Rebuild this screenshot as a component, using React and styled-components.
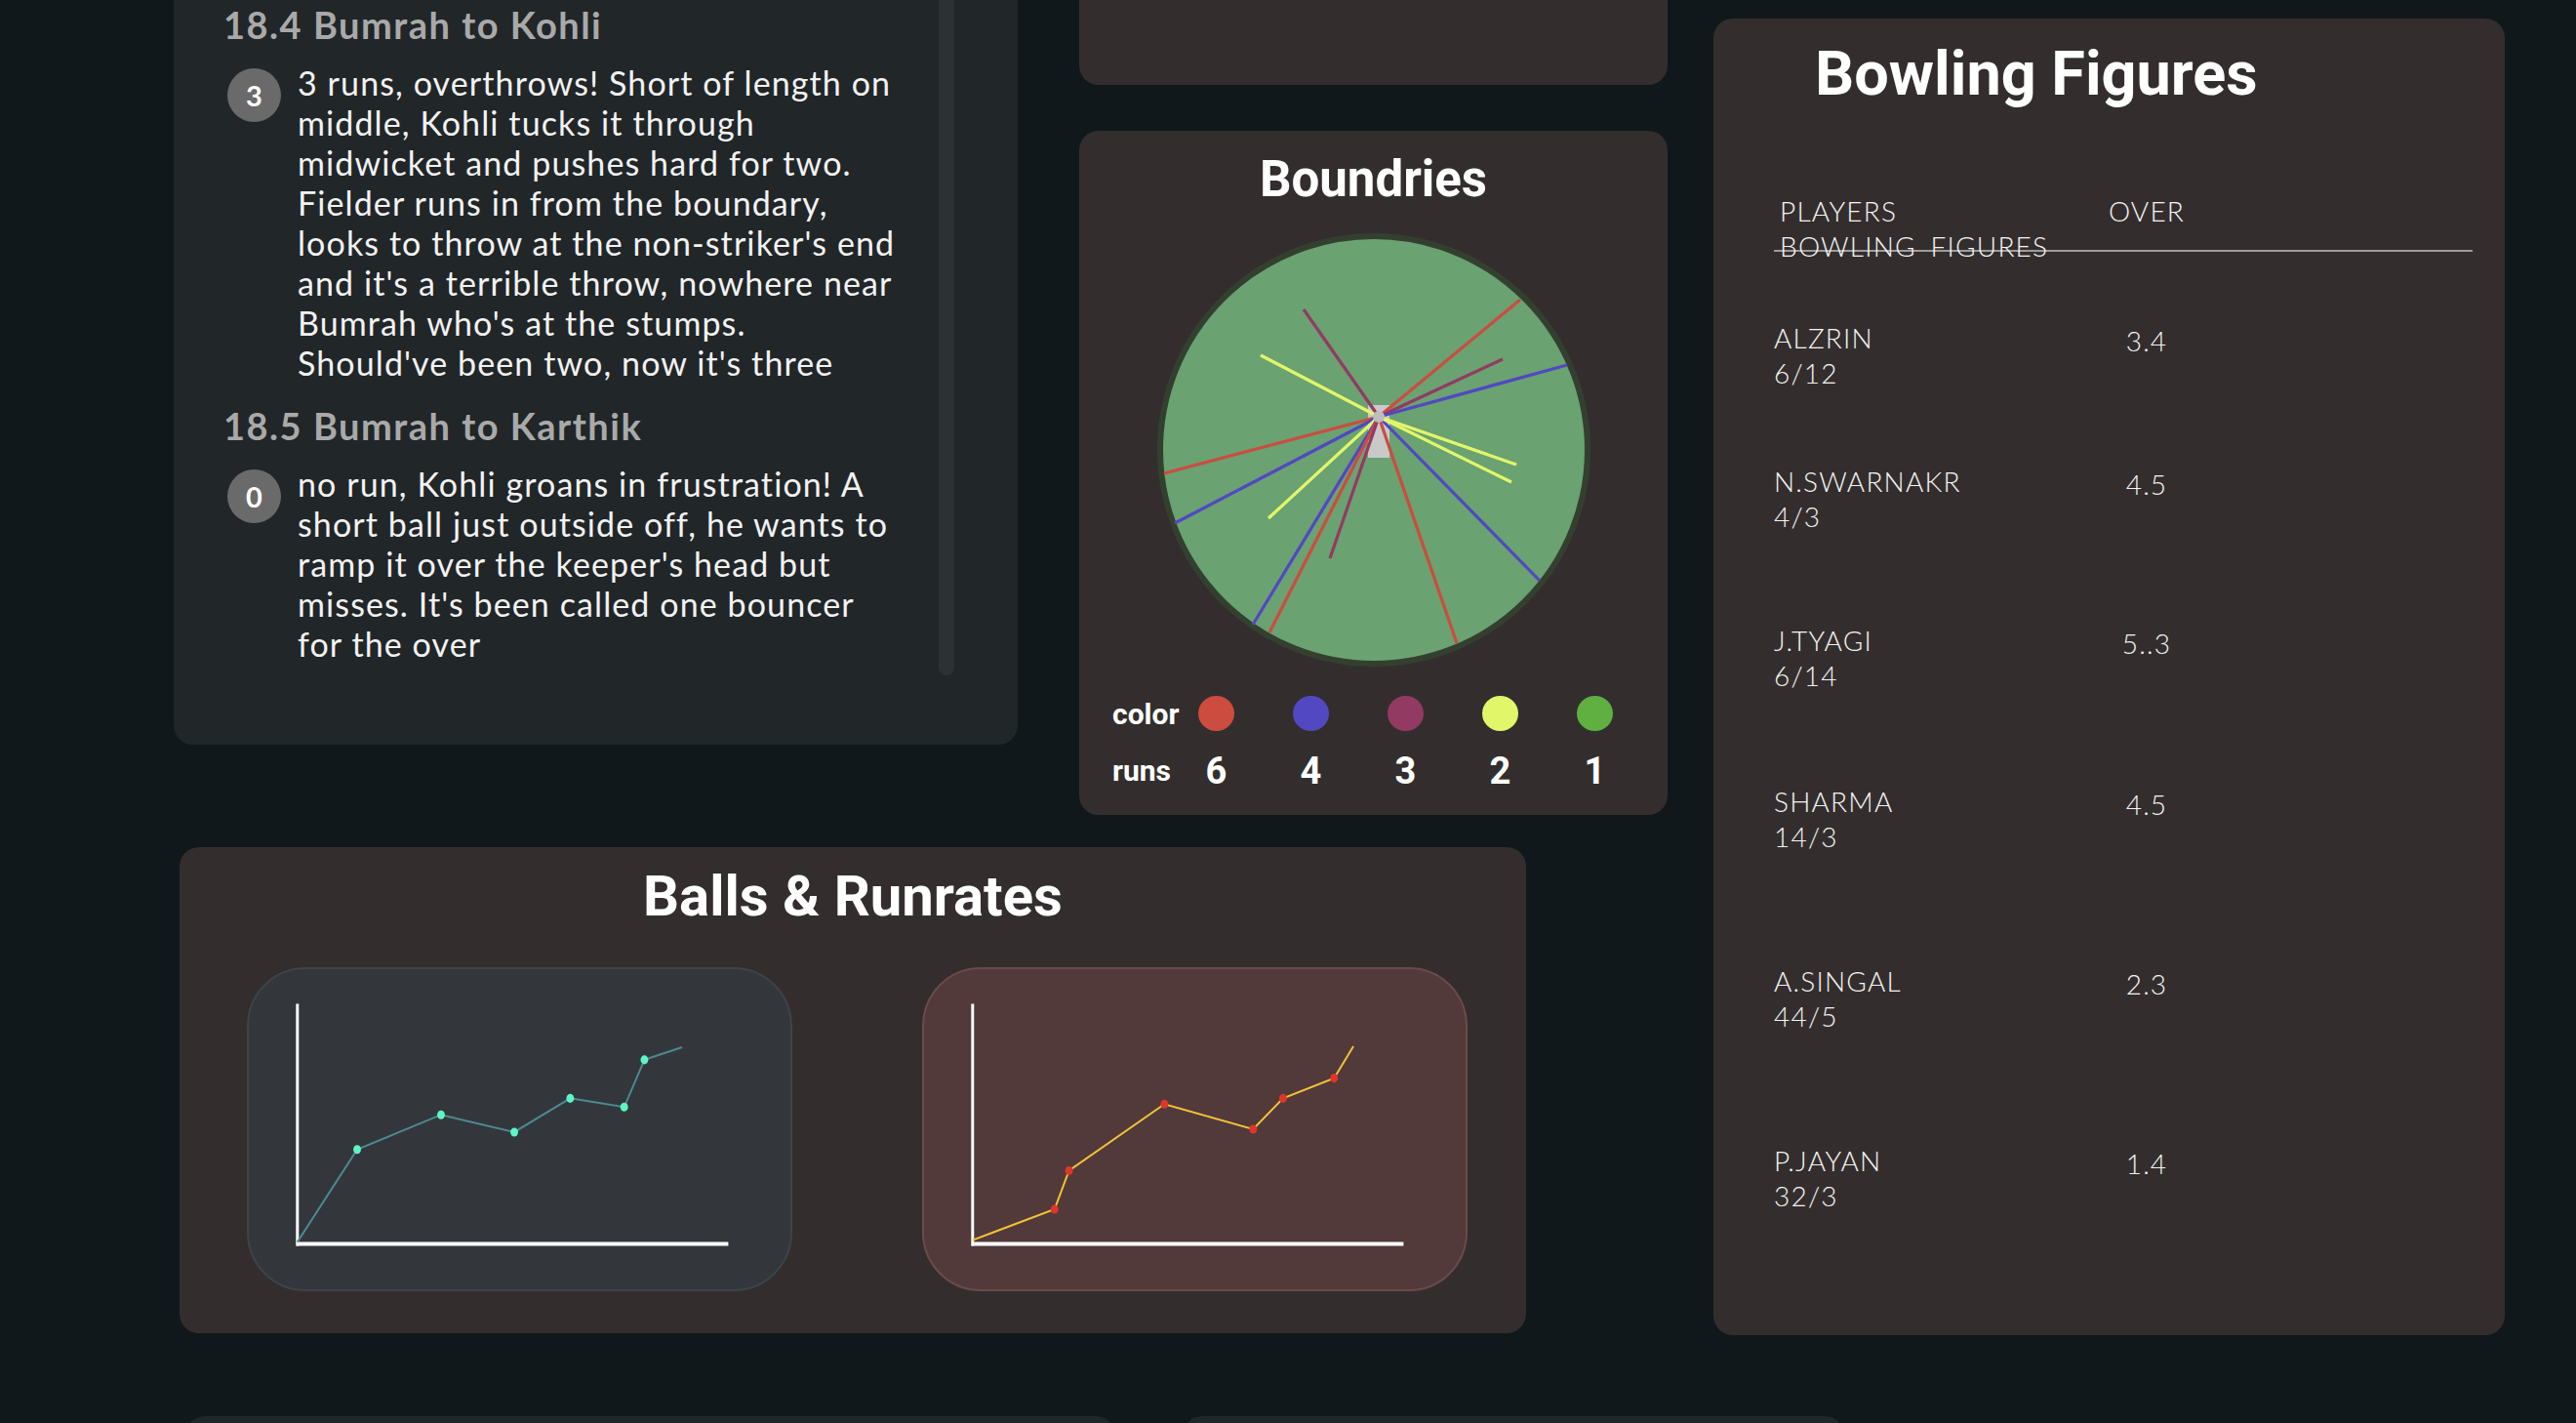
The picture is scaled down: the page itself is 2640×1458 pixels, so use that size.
import React from "react";
import styled, { createGlobalStyle } from "styled-components";

const GlobalStyle = createGlobalStyle`
  * { box-sizing: border-box; }
  body {
    margin: 0;
    background: #10181b;
    font-family: "Lato", "Liberation Sans", sans-serif;
    overflow: hidden;
  }
`;

const balls = [
  {
    over: "18.4 Bumrah to Kohli",
    runs: "3",
    text: "3 runs, overthrows! Short of length on middle, Kohli tucks it through midwicket and pushes hard for two. Fielder runs in from the boundary, looks to throw at the non-striker's end and it's a terrible throw, nowhere near Bumrah who's at the stumps. Should've been two, now it's three",
  },
  {
    over: "18.5 Bumrah to Karthik",
    runs: "0",
    text: "no run, Kohli groans in frustration! A short ball just outside off, he wants to ramp it over the keeper's head but misses. It's been called one bouncer for the over",
  },
];

const shotColors = {
  6: "#cc4c40",
  4: "#5148c2",
  3: "#933a62",
  2: "#e2f66a",
  1: "#5fb041",
};

// wagon wheel: end points of every shot, from the striker at (228,189)
const shots = [
  { run: 3, x: 151, y: 79 },
  { run: 2, x: 107, y: 126 },
  { run: 6, x: 373, y: 69 },
  { run: 3, x: 355, y: 130 },
  { run: 4, x: 421, y: 136 },
  { run: 6, x: 8, y: 247 },
  { run: 4, x: 19, y: 298 },
  { run: 2, x: 115, y: 293 },
  { run: 4, x: 99, y: 402 },
  { run: 6, x: 116, y: 410 },
  { run: 3, x: 178, y: 334 },
  { run: 6, x: 308, y: 421 },
  { run: 4, x: 393, y: 357 },
  { run: 2, x: 369, y: 238 },
  { run: 2, x: 364, y: 256 },
];

const bowlers = [
  { name: "ALZRIN", figures: "6/12", over: "3.4", space: 70 },
  { name: "N.SWARNAKR", figures: "4/3", over: "4.5", space: 75 },
  { name: "J.TYAGI", figures: "6/14", over: "5..3", space: 91 },
  { name: "SHARMA", figures: "14/3", over: "4.5", space: 93 },
  { name: "A.SINGAL", figures: "44/5", over: "2.3", space: 112 },
  { name: "P.JAYAN", figures: "32/3", over: "1.4", space: 112 },
];

const ballsLine = [
  [49, 283], [111, 187], [198, 151], [274, 169], [332, 134], [388, 143], [409, 94], [448, 81],
];
const rateLine = [
  [49, 281], [134, 249], [149, 209], [248, 140], [340, 166], [371, 134], [424, 113], [444, 80],
];

const Page = styled.div`
  width: 2640px;
  margin-top: -60px;
  padding-left: 178px;
`;

const Dashboard = styled.div`
  display: flex;
  align-items: flex-start;
  gap: 47px;
`;

const MainColumn = styled.div`
  width: 1531px;
  display: flex;
  flex-direction: column;
`;

const TopRow = styled.div`
  display: flex;
  align-items: flex-start;
  gap: 63px;
`;

const CommentaryCard = styled.div`
  width: 865px;
  height: 823px;
  display: flex;
  gap: 41px;
  padding: 63px 65px 0 51px;
  background: #212628;
  border-radius: 20px;
`;

const Feed = styled.div`
  width: 692px;
  display: flex;
  flex-direction: column;
`;

const OverTitle = styled.h3`
  margin: 0 0 16px;
  font-family: "Lato", "Liberation Sans", sans-serif;
  font-weight: 700;
  font-size: 38px;
  line-height: 45px;
  letter-spacing: 1.5px;
  color: #a9a9a9;
`;

const Ball = styled.div`
  display: flex;
  align-items: flex-start;
  gap: 17px;
  padding-left: 4px;
  margin-bottom: 22px;
`;

const RunBadge = styled.span`
  flex: none;
  width: 55px;
  height: 55px;
  margin-top: 6px;
  border-radius: 50%;
  background: #6a6a6a;
  color: #fff;
  display: flex;
  align-items: center;
  justify-content: center;
  font-family: "Lato", sans-serif;
  font-weight: 700;
  font-size: 29px;
`;

const BallText = styled.p`
  margin: 0;
  flex: 1;
  font-family: "Lato", "Liberation Sans", sans-serif;
  font-size: 34px;
  line-height: 41px;
  letter-spacing: 1.1px;
  color: #f2f2f2;
`;

const Track = styled.div`
  width: 16px;
  margin: -63px 0 71px;
  border-radius: 8px;
  background: #2c3133;
`;

const SideStack = styled.div`
  width: 603px;
  display: flex;
  flex-direction: column;
  gap: 47px;
`;

const Panel = styled.div`
  background: #332e2d;
  border-radius: 20px;
`;

const BlankPanel = styled(Panel)`
  height: 147px;
`;

const BoundaryPanel = styled(Panel)`
  display: flex;
  flex-direction: column;
  align-items: center;
  padding: 20px 0 23px;
`;

const PanelTitle = styled.h2`
  margin: 0;
  font-family: "Roboto", "Liberation Sans", sans-serif;
  font-weight: 700;
  font-size: ${(p) => p.$size || 51}px;
  line-height: 1.172;
  color: #ffffff;
`;

const Field = styled.svg`
  display: block;
  margin-top: 24px;
`;

const Legend = styled.div`
  align-self: flex-start;
  margin: 29px 0 0 34px;
  display: grid;
  grid-template-columns: 58px repeat(5, 97px);
  grid-template-rows: 37px 44px;
  row-gap: 18px;
  align-items: center;
  justify-items: center;
`;

const LegendLabel = styled.span`
  justify-self: start;
  white-space: nowrap;
  font-family: "Roboto", "Liberation Sans", sans-serif;
  font-weight: 700;
  font-size: 30px;
  color: #ffffff;
`;

const Swatch = styled.span`
  width: 37px;
  height: 36px;
  border-radius: 50%;
  background: ${(p) => p.$color};
`;

const RunValue = styled.span`
  font-family: "Roboto", "Liberation Sans", sans-serif;
  font-weight: 700;
  font-size: 38px;
  color: #ffffff;
`;

const RatesPanel = styled(Panel)`
  width: 1380px;
  height: 498px;
  margin: 33px 0 0 6px;
  padding-top: 17px;
  display: flex;
  flex-direction: column;
  align-items: center;
`;

const ChartRow = styled.div`
  align-self: stretch;
  display: flex;
  gap: 133px;
  padding-left: 69px;
  margin-top: 38px;
`;

const ChartBox = styled.div`
  width: 559px;
  height: 332px;
  border-radius: 60px;
  border: 2px solid ${(p) => (p.$tone === "rose" ? "#6a4b49" : "#3d4349")};
  background: ${(p) => (p.$tone === "rose" ? "#523a3a" : "#33373b")};
  overflow: hidden;
`;

const BowlingPanel = styled(Panel)`
  width: 811px;
  height: 1349px;
  margin-top: 79px;
  padding: 20px 33px 0 62px;
`;

const BowlingTitle = styled(PanelTitle)`
  margin-left: 42px;
`;

const TableHead = styled.div`
  display: grid;
  grid-template-columns: 316px 120px;
  margin: 85px 0 0 6px;
`;

const HeadCell = styled.span`
  font-family: "Lato", "Liberation Sans", sans-serif;
  font-weight: 300;
  font-size: 28px;
  line-height: 36px;
  letter-spacing: 1.2px;
  word-spacing: 6px;
  color: #f4f4f4;
  text-align: ${(p) => (p.$center ? "center" : "left")};
  grid-column: ${(p) => (p.$wide ? "1 / span 2" : "auto")};
`;

const Rule = styled.div`
  height: 2px;
  margin-top: -14px;
  background: #9c9c9c;
`;

const BowlerRow = styled.div`
  display: grid;
  grid-template-columns: 322px 120px;
  padding-top: ${(p) => p.$space}px;
`;

const BowlerCell = styled.div`
  font-family: "Lato", "Liberation Sans", sans-serif;
  font-weight: 300;
  font-size: 28px;
  line-height: 36px;
  letter-spacing: 1.2px;
  color: #f4f4f4;
`;

const OverCell = styled(BowlerCell)`
  text-align: center;
  padding-top: 3px;
`;

const BottomRow = styled.div`
  display: flex;
  gap: 69px;
  margin-top: 83px;
  padding-left: 12px;
`;

const BottomCard = styled.div`
  width: ${(p) => p.$width}px;
  height: 200px;
  border-radius: 20px;
  background: #212628;
`;

const WagonWheel = () => (
  <Field width="446" height="446" viewBox="0 0 446 446">
    <circle cx="223" cy="223" r="219" fill="#6aa271" stroke="#33402f" strokeWidth="6" />
    <rect x="217" y="177" width="22" height="54" fill="#c9c9c9" />
    {shots.map((s, i) => (
      <line
        key={i}
        x1="228"
        y1="189"
        x2={s.x}
        y2={s.y}
        stroke={shotColors[s.run]}
        strokeWidth="3.2"
      />
    ))}
    <circle cx="228" cy="189" r="6" fill="#bdbdbd" />
  </Field>
);

const LineChart = ({ points, line, dot }) => (
  <svg width="100%" height="100%" viewBox="0 0 559 332">
    <line x1="49" y1="36" x2="49" y2="287" stroke="#ffffff" strokeWidth="3" />
    <line x1="48" y1="285" x2="496" y2="285" stroke="#ffffff" strokeWidth="4" />
    <polyline
      points={points.map((p) => p.join(",")).join(" ")}
      fill="none"
      stroke={line}
      strokeWidth="2"
    />
    {points.slice(1, -1).map(([x, y], i) => (
      <ellipse key={i} cx={x} cy={y} rx="4" ry="4.6" fill={dot} />
    ))}
  </svg>
);

const App = () => {
  return (
    <>
      <GlobalStyle />
      <Page>
        <Dashboard>
          <MainColumn>
            <TopRow>
              {/* ball by ball commentary */}
              <CommentaryCard>
                <Feed>
                  {balls.map((b) => (
                    <React.Fragment key={b.over}>
                      <OverTitle>{b.over}</OverTitle>
                      <Ball>
                        <RunBadge>{b.runs}</RunBadge>
                        <BallText>{b.text}</BallText>
                      </Ball>
                    </React.Fragment>
                  ))}
                </Feed>
                <Track />
              </CommentaryCard>

              <SideStack>
                <BlankPanel />
                {/* wagon wheel */}
                <BoundaryPanel>
                  <PanelTitle>Boundries</PanelTitle>
                  <WagonWheel />
                  <Legend>
                    <LegendLabel>color</LegendLabel>
                    {[6, 4, 3, 2, 1].map((r) => (
                      <Swatch key={r} $color={shotColors[r]} />
                    ))}
                    <LegendLabel>runs</LegendLabel>
                    {[6, 4, 3, 2, 1].map((r) => (
                      <RunValue key={r}>{r}</RunValue>
                    ))}
                  </Legend>
                </BoundaryPanel>
              </SideStack>
            </TopRow>

            {/* balls & runrates */}
            <RatesPanel>
              <PanelTitle $size={58}>Balls &amp; Runrates</PanelTitle>
              <ChartRow>
                <ChartBox $tone="slate">
                  <LineChart points={ballsLine} line="#4b8b92" dot="#5ff5c3" />
                </ChartBox>
                <ChartBox $tone="rose">
                  <LineChart points={rateLine} line="#f3c437" dot="#e0352b" />
                </ChartBox>
              </ChartRow>
            </RatesPanel>
          </MainColumn>

          {/* bowling figures */}
          <BowlingPanel>
            <BowlingTitle $size={63}>Bowling Figures</BowlingTitle>
            <TableHead>
              <HeadCell>PLAYERS</HeadCell>
              <HeadCell $center>OVER</HeadCell>
              <HeadCell $wide>BOWLING FIGURES</HeadCell>
            </TableHead>
            <Rule />
            {bowlers.map((b) => (
              <BowlerRow key={b.name} $space={b.space}>
                <BowlerCell>
                  {b.name}
                  <br />
                  {b.figures}
                </BowlerCell>
                <OverCell>{b.over}</OverCell>
              </BowlerRow>
            ))}
          </BowlingPanel>
        </Dashboard>

        <BottomRow>
          <BottomCard $width={953} />
          <BottomCard $width={678} />
        </BottomRow>
      </Page>
    </>
  );
};

export default App;
